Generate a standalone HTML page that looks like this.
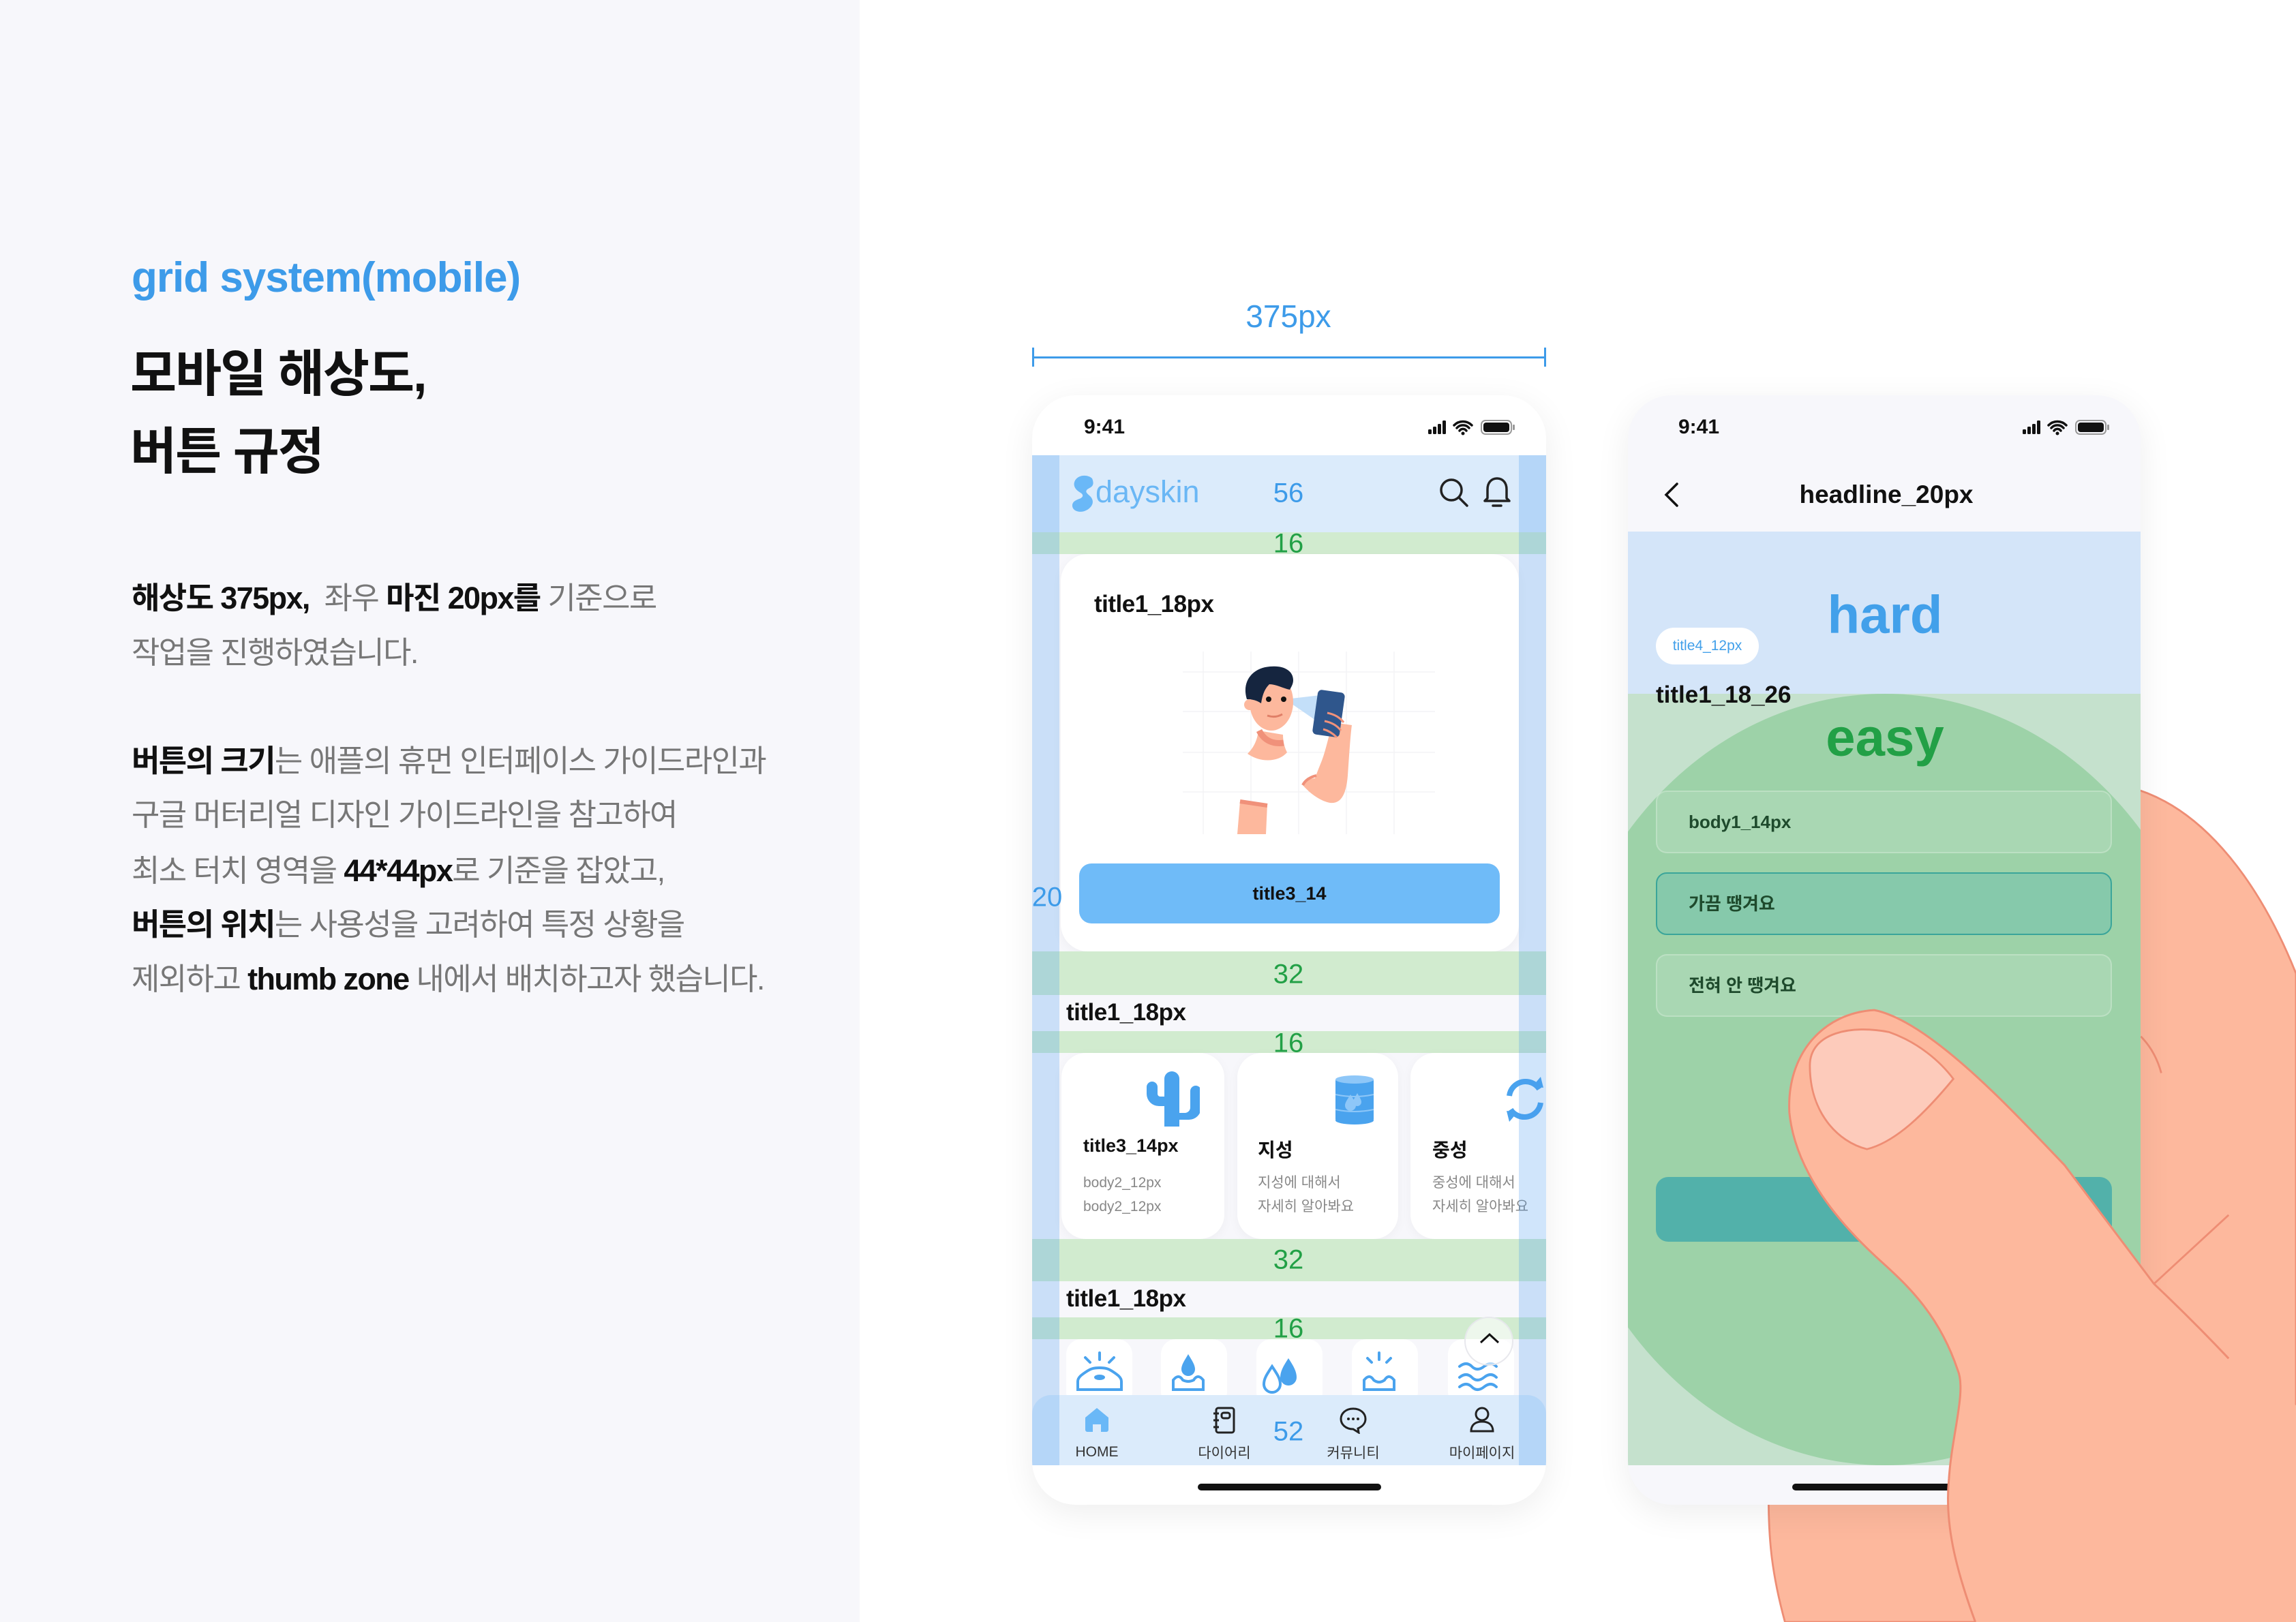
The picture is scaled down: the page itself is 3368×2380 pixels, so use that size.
<!DOCTYPE html>
<html><head><meta charset="utf-8">
<style>
*{margin:0;padding:0;box-sizing:border-box}
body{width:3368px;height:2380px;overflow:hidden;background:#fff;font-family:"Liberation Sans","Noto Sans CJK KR",sans-serif;position:relative}
.a{position:absolute}
.lp{left:0;top:0;width:1261px;height:2380px;background:#f7f7fb}
.ln{position:absolute;left:193px;height:80px;line-height:80px;font-size:45px;color:#777;white-space:nowrap;letter-spacing:-1.6px}
.ln b{color:#111;font-weight:700}
.ph{overflow:hidden;border-radius:64px;box-shadow:0 12px 50px rgba(0,0,0,0.07)}
.g{position:absolute;left:0;width:754px;background:#d1ebcf}
.num{position:absolute;font-size:40px;transform:translate(-50%,-50%);white-space:nowrap}
.gn{color:#22a046}.bn{color:#3d9be9}
.t1{position:absolute;font-size:35px;font-weight:600;color:#111;transform:translateY(-50%);white-space:nowrap;letter-spacing:-0.5px}
.card{position:absolute;background:#fff;border-radius:36px;box-shadow:0 4px 16px rgba(0,0,0,0.04)}
.tile{position:absolute;top:1385px;width:97px;height:100px;background:#fff;border-radius:22px}
.nv{position:absolute;transform:translate(-50%,-50%);font-size:21px;color:#333;white-space:nowrap}
.opt{position:absolute;left:41px;width:669px;height:92px;border-radius:16px;background:rgba(255,255,255,0.13);border:2px solid rgba(255,255,255,0.22);font-size:26px;color:#1e4a2c;line-height:88px;padding-left:46px;font-weight:600}
</style></head><body>
<div class="a lp"></div>
<div class="a" style="left:193px;top:372px;font-size:62px;color:#3d9be9;font-weight:700;white-space:nowrap;letter-spacing:-1px">grid system(mobile)</div>
<div class="a" style="left:191px;top:492px;font-size:74px;font-weight:700;color:#111;line-height:114px;letter-spacing:-2px">모바일 해상도,<br>버튼 규정</div>
<div class="ln" style="top:838px"><b>해상도 375px,</b>&nbsp; 좌우 <b>마진 20px를</b> 기준으로</div>
<div class="ln" style="top:918px">작업을 진행하였습니다.</div>
<div class="ln" style="top:1077px"><b>버튼의 크기</b>는 애플의 휴먼 인터페이스 가이드라인과</div>
<div class="ln" style="top:1156px">구글 머터리얼 디자인 가이드라인을 참고하여</div>
<div class="ln" style="top:1238px">최소 터치 영역을 <b>44*44px</b>로 기준을 잡았고,</div>
<div class="ln" style="top:1317px"><b>버튼의 위치</b>는 사용성을 고려하여 특정 상황을</div>
<div class="ln" style="top:1397px">제외하고 <b>thumb zone</b> 내에서 배치하고자 했습니다.</div>

<div class="a bn" style="left:1890px;top:464px;font-size:46px;transform:translate(-50%,-50%)">375px</div>
<div class="a" style="left:1514px;top:523px;width:754px;height:3px;background:#3d9be9"></div>
<div class="a" style="left:1514px;top:510px;width:3px;height:28px;background:#3d9be9"></div>
<div class="a" style="left:2265px;top:510px;width:3px;height:28px;background:#3d9be9"></div>

<!-- PHONE 1 -->
<div class="a ph" style="left:1514px;top:580px;width:754px;height:1628px;background:#fff">
  <div class="a" style="left:0;top:88px;width:754px;height:1482px;background:#f7f7fb"></div>
  <div class="a" style="left:76px;top:47px;transform:translateY(-50%);font-size:30px;font-weight:700;color:#111">9:41</div>
  <svg class="a" style="left:575px;top:32px" width="150" height="30" viewBox="0 0 150 30">
    <rect x="6" y="18" width="5" height="7" rx="1.5" fill="#111"/><rect x="13" y="14" width="5" height="11" rx="1.5" fill="#111"/><rect x="20" y="10" width="5" height="15" rx="1.5" fill="#111"/><rect x="27" y="5" width="5" height="20" rx="1.5" fill="#111"/>
    <path d="M44 12a18 18 0 0 1 26 0M48 16a12 12 0 0 1 18 0M52 20a6 6 0 0 1 10 0" stroke="#111" stroke-width="3.5" fill="none" stroke-linecap="round"/><circle cx="57" cy="24" r="2.5" fill="#111"/>
    <rect x="84" y="5" width="44" height="20" rx="6" fill="none" stroke="#999" stroke-width="2"/><rect x="87" y="8" width="38" height="14" rx="4" fill="#111"/><rect x="130" y="11" width="3" height="8" rx="1" fill="#999"/>
  </svg>
  <div class="a" style="left:0;top:88px;width:754px;height:113px;background:#dbebfb"></div>
  <svg class="a" style="left:58px;top:116px" width="36" height="56" viewBox="0 0 36 56"><path d="M30 6c-6-6-20-6-25 3-4 8 1 14 8 18 5 3 4 7-2 9-5 2-10 4-10 10 0 8 12 12 22 6 8-5 11-13 4-20-4-4-8-6-4-10 4-3 12-4 7-16z" fill="#6ab8f7"/></svg>
  <div class="a" style="left:93px;top:142px;transform:translateY(-50%);font-size:45px;color:#6ab7f5">dayskin</div>
  <svg class="a" style="left:596px;top:120px" width="46" height="46" viewBox="0 0 46 46"><circle cx="19" cy="19" r="15" stroke="#222" stroke-width="3.5" fill="none"/><path d="M30 30l12 12" stroke="#222" stroke-width="3.5" stroke-linecap="round"/></svg>
  <svg class="a" style="left:662px;top:118px" width="40" height="50" viewBox="0 0 40 50"><path d="M20 4c-9 0-14 7-14 16v13l-4 4h36l-4-4V20c0-9-5-16-14-16z" stroke="#222" stroke-width="3.5" fill="none" stroke-linejoin="round"/><path d="M14 44h12" stroke="#222" stroke-width="3.5" stroke-linecap="round"/></svg>
  <div class="g" style="top:201px;height:32px"></div>
  <div class="card" style="left:42px;top:233px;width:672px;height:583px;border-radius:40px"></div>
  <div class="t1" style="left:91px;top:307px">title1_18px</div>
  <svg class="a" style="left:221px;top:376px" width="370" height="268" viewBox="0 0 370 268">
    <g stroke="#f3f3f6" stroke-width="1.5"><path d="M0 30H370M0 88H370M0 148H370M0 206H370M30 0V268M100 0V268M170 0V268M240 0V268M310 0V268"/></g>
    <path d="M80 268l4-48 40 4-2 44z" fill="#fdb89d"/><path d="M84 220l40 6" stroke="#f0917a" stroke-width="6"/>
    <path d="M176 196c12 14 28 24 40 26 18 2 24-16 26-40 2-30 4-60 6-74l-28-4c-6 20-10 40-16 56-4 10-8 20-10 26-6 0-14 4-18 10z" fill="#fdb89d"/>
    <path d="M176 196c4-8 12-12 20-14" stroke="#f0917a" stroke-width="4" fill="none"/>
    <path d="M150 70l52-6 6 46z" fill="#bcdcf8" opacity="0.9"/>
    <rect x="194" y="58" width="40" height="66" rx="6" transform="rotate(8 214 91)" fill="#2f568c"/>
    <path d="M212 90c10 2 18 6 24 14M208 102c10 2 18 6 24 14M206 114c8 2 14 6 20 12" stroke="#f0917a" stroke-width="3" fill="none"/>
    <path d="M95 150c8-8 14-18 16-34l36 6c0 10 2 18 6 26-12 14-38 16-58 2z" fill="#fdb89d"/>
    <path d="M112 116c8 16 22 20 36 18" stroke="#f0917a" stroke-width="9" fill="none"/>
    <ellipse cx="130" cy="74" rx="32" ry="42" fill="#fdb89d"/>
    <path d="M94 70c-8-26 8-46 34-48 20-2 34 6 34 20 0 6-3 10-5 14-10-2-20-8-30-8-6 6-10 14-12 28-6-4-12-6-21-6z" fill="#15253f"/>
    <circle cx="98" cy="78" r="8" fill="#fdb89d"/>
    <circle cx="126" cy="70" r="4" fill="#111"/><circle cx="148" cy="70" r="4" fill="#111"/>
    <path d="M124 94q12 4 22-2" stroke="#e07f67" stroke-width="3" fill="none"/>
  </svg>
  <div class="a" style="left:69px;top:687px;width:617px;height:88px;border-radius:18px;background:#6fbbf8;text-align:center;line-height:88px;font-size:27px;font-weight:700;color:#111">title3_14</div>
  <div class="g" style="top:816px;height:64px"></div>
  <div class="t1" style="left:50px;top:906px">title1_18px</div>
  <div class="g" style="top:933px;height:32px"></div>
  <div class="card" style="left:43px;top:965px;width:239px;height:273px"></div>
  <div class="card" style="left:301px;top:965px;width:236px;height:273px"></div>
  <div class="card" style="left:555px;top:965px;width:245px;height:273px"></div>
  <svg class="a" style="left:164px;top:991px" width="82" height="82" viewBox="0 0 82 82"><path d="M30 82V12a11 11 0 0 1 22 0v50h8a8 8 0 0 0 8-8V30a8 8 0 0 1 16 0v24a18 18 0 0 1-18 18H52v10zM30 52H22A18 18 0 0 1 4 34V24a8 8 0 0 1 16 0v10a4 4 0 0 0 4 4h6z" fill="#4aa3ee"/></svg>
  <svg class="a" style="left:443px;top:996px" width="60" height="76" viewBox="0 0 60 76"><rect x="2" y="6" width="56" height="64" rx="4" fill="#4aa3ee"/><ellipse cx="30" cy="8" rx="28" ry="6" fill="#8ec7f8"/><ellipse cx="30" cy="68" rx="28" ry="6" fill="#4aa3ee"/><path d="M2 30q28 6 56 0M2 52q28 6 56 0" stroke="#8ec7f8" stroke-width="2" fill="none"/><path d="M24 30c-5 8-8 12-8 16a8 8 0 0 0 16 0c0-4-3-8-8-16zM34 28c-4 7-6 10-6 13a6 6 0 0 0 12 0c0-3-2-6-6-13z" fill="#8ec7f8"/></svg>
  <svg class="a" style="left:688px;top:998px" width="70" height="70" viewBox="0 0 70 70"><path d="M12 30a24 24 0 0 1 44-10M58 40a24 24 0 0 1-44 10" stroke="#4aa3ee" stroke-width="8" fill="none"/><path d="M46 16l16 2-4-16zM24 54l-16-2 4 16z" fill="#4aa3ee"/></svg>
  <div class="a" style="left:75px;top:1086px;font-size:27px;font-weight:700;color:#111">title3_14px</div>
  <div class="a" style="left:75px;top:1138px;font-size:21px;color:#888;line-height:35px">body2_12px<br>body2_12px</div>
  <div class="a" style="left:331px;top:1086px;font-size:28px;font-weight:700;color:#111">지성</div>
  <div class="a" style="left:331px;top:1138px;font-size:21px;color:#888;line-height:35px">지성에 대해서<br>자세히 알아봐요</div>
  <div class="a" style="left:587px;top:1086px;font-size:28px;font-weight:700;color:#111">중성</div>
  <div class="a" style="left:587px;top:1138px;font-size:21px;color:#888;line-height:35px;white-space:nowrap">중성에 대해서<br>자세히 알아봐요</div>
  <div class="g" style="top:1238px;height:62px"></div>
  <div class="t1" style="left:50px;top:1326px">title1_18px</div>
  <div class="g" style="top:1353px;height:32px"></div>
  <div class="tile" style="left:50px"></div><div class="tile" style="left:189px"></div><div class="tile" style="left:329px"></div><div class="tile" style="left:469px"></div><div class="tile" style="left:610px"></div>
  <svg class="a" style="left:50px;top:1385px" width="700" height="90" viewBox="0 0 700 90">
    <g stroke="#4aa3ee" stroke-width="4" fill="none" stroke-linecap="round">
      <path d="M17 74v-12c0-6 6-10 12-14 6-4 10-6 20-6s14 2 20 6c6 4 12 8 12 14v12z"/><path d="M49 20v10M28 27l7 7M70 27l-7 7"/>
      <path d="M157 74v-14q8-10 14 0 8 4 16 0 6-10 14 0v14z"/>
      <path d="M302 40c-8 12-12 18-12 26a12 12 0 0 0 24 0c0-8-4-14-12-26z"/>
      <path d="M437 74v-14q8-10 14 0 8 6 16 0 6-10 14 0v14z"/><path d="M459 20v10M442 28l6 6M476 28l-6 6"/>
      <path d="M577 40q10-8 18 0t18 0t18 0M577 56q10-8 18 0t18 0t18 0M577 70q10-8 18 0t18 0t18 0"/>
    </g>
    <ellipse cx="49" cy="56" rx="8" ry="4" fill="#4aa3ee"/>
    <path d="M179 22c-6 10-10 16-10 22a10 10 0 0 0 20 0c0-6-4-12-10-22z" fill="#4aa3ee"/>
    <path d="M326 28c-8 12-12 20-12 28a12 12 0 0 0 24 0c0-8-4-16-12-28z" fill="#4aa3ee"/>
  </svg>
  <div class="a" style="left:634px;top:1352px;width:72px;height:72px;border-radius:50%;background:rgba(255,255,255,0.6);border:2px solid rgba(230,230,235,0.9)"></div>
  <svg class="a" style="left:654px;top:1374px" width="34" height="20" viewBox="0 0 34 20"><path d="M4 16L17 4l13 12" stroke="#111" stroke-width="3" fill="none"/></svg>
  <div class="a" style="left:0;top:1467px;width:754px;height:103px;background:#dbebfb;border-radius:28px 28px 0 0"></div>
  <svg class="a" style="left:76px;top:1484px" width="38" height="38" viewBox="0 0 38 38"><path d="M2 16L19 2l17 14v18a3 3 0 0 1-3 3h-8V26h-12v11H5a3 3 0 0 1-3-3z" fill="#6ab8f7"/></svg>
  <svg class="a" style="left:264px;top:1484px" width="36" height="40" viewBox="0 0 36 40"><rect x="6" y="2" width="26" height="36" rx="3" stroke="#222" stroke-width="3" fill="none"/><rect x="14" y="9" width="12" height="8" rx="3" stroke="#222" stroke-width="3" fill="none"/><path d="M2 10h8M2 20h8M2 30h8" stroke="#222" stroke-width="3"/></svg>
  <svg class="a" style="left:450px;top:1484px" width="42" height="40" viewBox="0 0 42 40"><path d="M21 3C10 3 3 10 3 18s7 15 18 15l8 5-1-6c7-3 11-8 11-14 0-8-7-15-18-15z" stroke="#222" stroke-width="3" fill="none"/><circle cx="14" cy="18" r="2" fill="#222"/><circle cx="21" cy="18" r="2" fill="#222"/><circle cx="28" cy="18" r="2" fill="#222"/></svg>
  <svg class="a" style="left:640px;top:1482px" width="40" height="42" viewBox="0 0 40 42"><circle cx="20" cy="13" r="9" stroke="#222" stroke-width="3" fill="none"/><path d="M4 38c0-10 7-14 16-14s16 4 16 14z" stroke="#222" stroke-width="3" fill="none"/></svg>
  <div class="nv" style="left:95px;top:1551px">HOME</div>
  <div class="nv" style="left:282px;top:1551px">다이어리</div>
  <div class="nv" style="left:471px;top:1551px">커뮤니티</div>
  <div class="nv" style="left:660px;top:1551px">마이페이지</div>
  <div class="a" style="left:243px;top:1597px;width:269px;height:10px;border-radius:5px;background:#111"></div>
  <div class="a" style="left:0;top:88px;width:40px;height:1482px;background:rgba(66,150,240,0.25)"></div>
  <div class="a" style="left:714px;top:88px;width:40px;height:1482px;background:rgba(66,150,240,0.25)"></div>
  <div class="num bn" style="left:376px;top:144px">56</div>
  <div class="num gn" style="left:376px;top:218px">16</div>
  <div class="num bn" style="left:22px;top:737px">20</div>
  <div class="num gn" style="left:376px;top:850px">32</div>
  <div class="num gn" style="left:376px;top:951px">16</div>
  <div class="num gn" style="left:376px;top:1269px">32</div>
  <div class="num gn" style="left:376px;top:1370px">16</div>
  <div class="num bn" style="left:376px;top:1521px">52</div>
</div>

<svg class="a" style="left:0;top:0;z-index:1" width="3368" height="2380" viewBox="0 0 1568 1108">
  <path d="M1455,538 C1500,550 1540,595 1568,665 L1568,1108 L1219,1108 C1210,1075 1207,1050 1208,1010 L1208,560 Z" fill="#fdb89d" stroke="#ee8d74" stroke-width="1.3"/>
  <path d="M1462,708 C1468,714 1473,722 1476,733" stroke="#ee8d74" stroke-width="1.3" fill="none"/>
</svg>

<!-- PHONE 2 -->
<div class="a ph" style="left:2388px;top:580px;width:752px;height:1628px;background:#f7f7fb;z-index:2">
  <div class="a" style="left:74px;top:47px;transform:translateY(-50%);font-size:30px;font-weight:700;color:#111">9:41</div>
  <svg class="a" style="left:573px;top:32px" width="150" height="30" viewBox="0 0 150 30">
    <rect x="6" y="18" width="5" height="7" rx="1.5" fill="#111"/><rect x="13" y="14" width="5" height="11" rx="1.5" fill="#111"/><rect x="20" y="10" width="5" height="15" rx="1.5" fill="#111"/><rect x="27" y="5" width="5" height="20" rx="1.5" fill="#111"/>
    <path d="M44 12a18 18 0 0 1 26 0M48 16a12 12 0 0 1 18 0M52 20a6 6 0 0 1 10 0" stroke="#111" stroke-width="3.5" fill="none" stroke-linecap="round"/><circle cx="57" cy="24" r="2.5" fill="#111"/>
    <rect x="84" y="5" width="44" height="20" rx="6" fill="none" stroke="#999" stroke-width="2"/><rect x="87" y="8" width="38" height="14" rx="4" fill="#111"/><rect x="130" y="11" width="3" height="8" rx="1" fill="#999"/>
  </svg>
  <svg class="a" style="left:50px;top:126px" width="30" height="40" viewBox="0 0 30 40"><path d="M22 4L6 20l16 16" stroke="#111" stroke-width="3.5" fill="none" stroke-linecap="round"/></svg>
  <div class="a" style="left:379px;top:146px;transform:translate(-50%,-50%);font-size:37px;font-weight:600;color:#111;white-space:nowrap">headline_20px</div>
  <div class="a" style="left:0;top:200px;width:752px;height:238px;background:#d4e5f9"></div>
  <div class="a" style="left:0;top:438px;width:752px;height:1132px;background:#c5e1cd;overflow:hidden">
    <div class="a" style="left:-115px;top:0;width:984px;height:1132px;border-radius:50%;background:#9dd2a8"></div>
  </div>
  <div class="a" style="left:377px;top:322px;transform:translate(-50%,-50%);font-size:78px;font-weight:700;color:#42a0ea">hard</div>
  <div class="a" style="left:377px;top:502px;transform:translate(-50%,-50%);font-size:78px;font-weight:700;color:#22a046">easy</div>
  <div class="a" style="left:41px;top:341px;width:151px;height:54px;border-radius:27px;background:#fff;color:#42a0ea;font-size:21px;text-align:center;line-height:54px">title4_12px</div>
  <div class="a" style="left:41px;top:440px;transform:translateY(-50%);font-size:35px;font-weight:600;color:#111">title1_18_26</div>
  <div class="opt" style="top:580px">body1_14px</div>
  <div class="opt" style="top:700px;background:#86c9ab;border-color:#3aa59a">가끔 땡겨요</div>
  <div class="opt" style="top:820px">전혀 안 땡겨요</div>
  <div class="a" style="left:41px;top:1147px;width:669px;height:95px;border-radius:18px;background:#52b1aa"></div>
  <div class="a" style="left:241px;top:1597px;width:269px;height:10px;border-radius:5px;background:#111"></div>
</div>

<svg class="a" style="left:0;top:0;z-index:3" width="3368" height="2380" viewBox="0 0 1568 1108">
  <path d="M1349,1108 C1335,1070 1328,1040 1331,1010 C1333,980 1343,950 1337,936 C1325,900 1305,880 1285,862 C1255,835 1226,800 1222,760 C1220,720 1245,692 1280,690 C1320,698 1380,765 1410,796 L1471,877 C1490,895 1505,910 1522,928 L1568,960 L1568,1108 Z" fill="#fdb89d"/>
  <path d="M1349,1108 C1335,1070 1328,1040 1331,1010 C1333,980 1343,950 1337,936 C1325,900 1305,880 1285,862 C1255,835 1226,800 1222,760 C1220,720 1245,692 1280,690 C1320,698 1380,765 1410,796 L1471,877 C1490,895 1505,910 1522,928" fill="none" stroke="#ee8d74" stroke-width="1.4"/>
  <path d="M1471,877 L1522,830" stroke="#ee8d74" stroke-width="1.3"/>
  <path d="M1236,728 C1236,705 1265,700 1290,705 C1310,712 1325,725 1334,737 C1315,760 1295,780 1275,785 C1255,780 1236,760 1236,728 Z" fill="#fdcbbb" stroke="#ee8d74" stroke-width="1.3"/>
</svg>
</body></html>
